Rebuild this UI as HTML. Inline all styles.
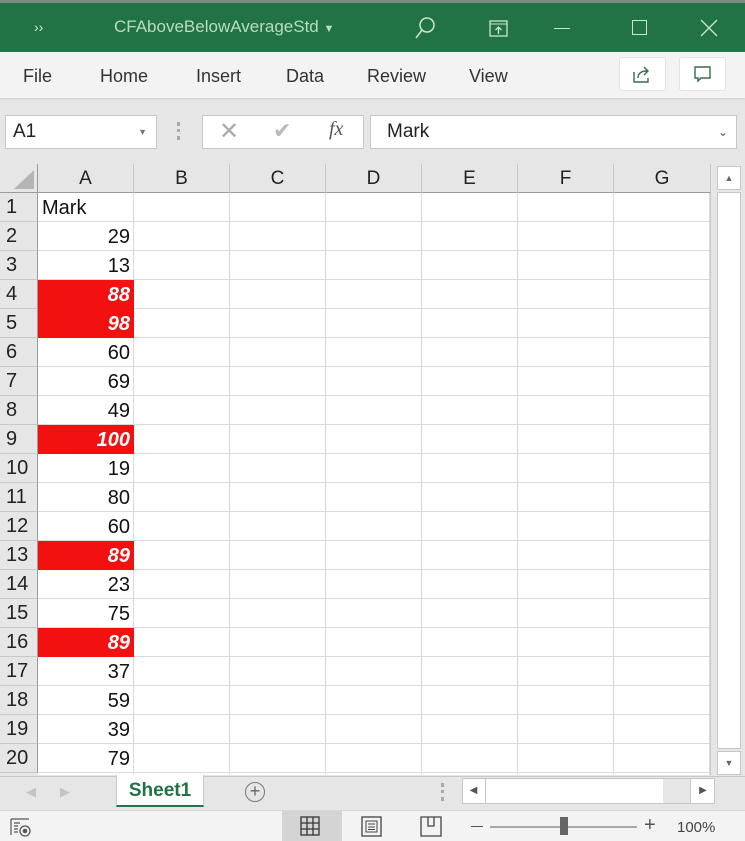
<!DOCTYPE html>
<html><head><style>
*{margin:0;padding:0;box-sizing:border-box}
body{width:745px;height:841px;overflow:hidden;position:relative;background:#e6e6e6;font-family:"Liberation Sans",sans-serif}
.a{position:absolute}
.title{left:0;top:0;width:745px;height:52px;background:#217346;border-top:3px solid #7c8a80}
.menu{left:0;top:52px;width:745px;height:46px;background:#f3f3f3;box-shadow:0 1px 2px #ccc}
.menu span{position:absolute;top:14px;font-size:18px;color:#333}
.hdr{top:164px;height:29px;background:#e6e6e6;border-right:1px solid #c8c8c8;border-bottom:1px solid #9b9b9b;text-align:center;font-size:19px;line-height:30px;color:#222}
.rh{left:0;width:38px;height:29px;background:#e6e6e6;border-bottom:1px solid #c8c8c8;border-right:1px solid #9b9b9b;font-size:20px;line-height:29px;padding-left:6px;color:#222}
.cell{left:38px;width:96px;height:29px;font-size:20px;line-height:30px;text-align:right;padding-right:4px;color:#111}
.red{background:#f21010;color:#fff;font-weight:bold;font-style:italic}
</style></head><body>
<div class="a title">
 <div class="a" style="left:34px;top:16px;color:#cfe6d7;font-size:14px">››</div>
 <div class="a" style="left:114px;top:14px;color:#b7dcc3;font-size:17px">CFAboveBelowAverageStd <span style="font-size:11px">▼</span></div>
 <svg class="a" style="left:412px;top:12px" width="26" height="26"><circle cx="15" cy="10" r="7" fill="none" stroke="#cde3d4" stroke-width="1.5"/><line x1="10" y1="15" x2="4" y2="23" stroke="#cde3d4" stroke-width="1.5"/></svg>
 <svg class="a" style="left:489px;top:17px" width="20" height="18"><rect x="1" y="1" width="17" height="15" fill="none" stroke="#cde3d4" stroke-width="1.3"/><line x1="1" y1="4" x2="18" y2="4" stroke="#cde3d4"/><path d="M9.5 14V7M6.5 10l3-3 3 3" fill="none" stroke="#cde3d4" stroke-width="1.3"/></svg>
 <div class="a" style="left:554px;top:25px;width:16px;height:1px;background:#cde3d4"></div>
 <div class="a" style="left:632px;top:17px;width:15px;height:15px;border:1.3px solid #cde3d4"></div>
 <svg class="a" style="left:700px;top:16px" width="18" height="18"><path d="M1 1L17 17M17 1L1 17" stroke="#cde3d4" stroke-width="1.3"/></svg>
</div>
<div class="a menu">
 <span style="left:23px">File</span><span style="left:100px">Home</span><span style="left:196px">Insert</span><span style="left:286px">Data</span><span style="left:367px">Review</span><span style="left:469px">View</span>
 <div class="a" style="left:619px;top:5px;width:47px;height:34px;background:#fff;border:1px solid #e2e2e2;border-radius:3px"></div>
 <svg class="a" style="left:632px;top:12px" width="20" height="20"><path d="M2 8v10h14v-4" fill="none" stroke="#3a6b4c" stroke-width="1.4"/><path d="M6 14c0-5 4-7 9-7M12 3l4 4-4 4" fill="none" stroke="#3a6b4c" stroke-width="1.4"/></svg>
 <div class="a" style="left:679px;top:5px;width:47px;height:34px;background:#fff;border:1px solid #e2e2e2;border-radius:3px"></div>
 <svg class="a" style="left:693px;top:13px" width="20" height="20"><path d="M2 2h15v11H8l-3 3v-3H2z" fill="none" stroke="#3a6b4c" stroke-width="1.4"/></svg>
</div>
<div class="a" style="left:5px;top:115px;width:152px;height:34px;background:#fff;border:1px solid #c6c6c6;font-size:19px;line-height:32px;padding-left:7px;color:#222">A1<span style="position:absolute;right:9px;font-size:9px;color:#777">▼</span></div>
<div class="a" style="left:177px;top:122px;width:3px;height:18px;border-left:3px dotted #aaa"></div>
<div class="a" style="left:202px;top:115px;width:162px;height:34px;background:#fff;border:1px solid #c6c6c6"></div>
<div class="a" style="left:219px;top:117px;font-size:24px;color:#aaa">✕</div>
<div class="a" style="left:273px;top:118px;font-size:22px;color:#bbb">✔</div>
<div class="a" style="left:329px;top:118px;font-size:20px;font-style:italic;font-family:'Liberation Serif',serif;color:#555">fx</div>
<div class="a" style="left:370px;top:115px;width:367px;height:34px;background:#fff;border:1px solid #c6c6c6;font-size:19px;line-height:32px;padding-left:16px;color:#222">Mark<span style="position:absolute;right:8px;font-size:12px;color:#555">⌄</span></div>
<div class="a" style="left:38px;top:193px;width:673px;height:582px;background:#fff;
background-image:linear-gradient(to right,#dadada 1px,transparent 1px),linear-gradient(to bottom,#dadada 1px,transparent 1px);background-size:96px 29px;background-position:95px 28px;border-right:1px solid #c8c8c8"></div>
<div class="a" style="left:0;top:164px;width:38px;height:29px;background:#e6e6e6;border-right:1px solid #9b9b9b;border-bottom:1px solid #9b9b9b"></div>
<svg class="a" style="left:10px;top:168px" width="26" height="22"><polygon points="24,2 24,21 4,21" fill="#b5b5b5"/></svg>
<div class="a hdr" style="left:38px;width:96px">A</div>
<div class="a hdr" style="left:134px;width:96px">B</div>
<div class="a hdr" style="left:230px;width:96px">C</div>
<div class="a hdr" style="left:326px;width:96px">D</div>
<div class="a hdr" style="left:422px;width:96px">E</div>
<div class="a hdr" style="left:518px;width:96px">F</div>
<div class="a hdr" style="left:614px;width:97px">G</div>
<div class="a rh" style="top:193px">1</div><div class="a cell" style="top:193px;text-align:left;padding-left:4px">Mark</div>
<div class="a rh" style="top:222px">2</div><div class="a cell" style="top:222px">29</div>
<div class="a rh" style="top:251px">3</div><div class="a cell" style="top:251px">13</div>
<div class="a rh" style="top:280px">4</div><div class="a cell red" style="top:280px">88</div>
<div class="a rh" style="top:309px">5</div><div class="a cell red" style="top:309px">98</div>
<div class="a rh" style="top:338px">6</div><div class="a cell" style="top:338px">60</div>
<div class="a rh" style="top:367px">7</div><div class="a cell" style="top:367px">69</div>
<div class="a rh" style="top:396px">8</div><div class="a cell" style="top:396px">49</div>
<div class="a rh" style="top:425px">9</div><div class="a cell red" style="top:425px">100</div>
<div class="a rh" style="top:454px">10</div><div class="a cell" style="top:454px">19</div>
<div class="a rh" style="top:483px">11</div><div class="a cell" style="top:483px">80</div>
<div class="a rh" style="top:512px">12</div><div class="a cell" style="top:512px">60</div>
<div class="a rh" style="top:541px">13</div><div class="a cell red" style="top:541px">89</div>
<div class="a rh" style="top:570px">14</div><div class="a cell" style="top:570px">23</div>
<div class="a rh" style="top:599px">15</div><div class="a cell" style="top:599px">75</div>
<div class="a rh" style="top:628px">16</div><div class="a cell red" style="top:628px">89</div>
<div class="a rh" style="top:657px">17</div><div class="a cell" style="top:657px">37</div>
<div class="a rh" style="top:686px">18</div><div class="a cell" style="top:686px">59</div>
<div class="a rh" style="top:715px">19</div><div class="a cell" style="top:715px">39</div>
<div class="a rh" style="top:744px">20</div><div class="a cell" style="top:744px">79</div>
<div class="a" style="left:0;top:773px;width:38px;height:3px;background:#e6e6e6"></div>
<div class="a" style="left:713px;top:164px;width:32px;height:612px;background:#e6e6e6"></div>
<div class="a" style="left:717px;top:166px;width:24px;height:24px;background:#fff;border:1px solid #c6c6c6;font-size:9px;text-align:center;line-height:22px;color:#666">▲</div>
<div class="a" style="left:717px;top:192px;width:24px;height:557px;background:#fff;border:1px solid #c6c6c6"></div>
<div class="a" style="left:717px;top:751px;width:24px;height:24px;background:#fff;border:1px solid #c6c6c6;font-size:9px;text-align:center;line-height:22px;color:#666">▼</div>
<div class="a" style="left:0;top:776px;width:745px;height:34px;background:#e6e6e6;border-top:1px solid #c8c8c8"></div>
<div class="a" style="left:26px;top:784px;font-size:13px;color:#c4c4c4">◀</div>
<div class="a" style="left:60px;top:784px;font-size:13px;color:#c4c4c4">▶</div>
<div class="a" style="left:116px;top:775px;width:88px;height:32px;background:#fff;border-left:1px solid #c8c8c8;border-right:1px solid #c8c8c8;border-bottom:2px solid #217346;font-size:19px;font-weight:bold;color:#217346;text-align:center;line-height:31px">Sheet1</div>
<div class="a" style="left:245px;top:782px;width:20px;height:20px;border:1.3px solid #777;border-radius:50%;text-align:center;line-height:17px;font-size:18px;color:#666">+</div>
<div class="a" style="left:441px;top:783px;width:3px;height:18px;border-left:3px dotted #aaa"></div>
<div class="a" style="left:462px;top:778px;width:253px;height:26px;background:#fff;border:1px solid #c6c6c6"></div>
<div class="a" style="left:462px;top:778px;width:24px;height:26px;border-right:1px solid #c6c6c6;font-size:10px;text-align:center;line-height:25px;color:#555">◀</div>
<div class="a" style="left:663px;top:779px;width:27px;height:24px;background:#e6e6e6"></div>
<div class="a" style="left:690px;top:778px;width:25px;height:26px;border-left:1px solid #c6c6c6;font-size:10px;text-align:center;line-height:25px;color:#555">▶</div>
<div class="a" style="left:0;top:810px;width:745px;height:31px;background:#f3f3f3;border-top:1px solid #d6d6d6"></div>
<svg class="a" style="left:9px;top:817px" width="24" height="22"><path d="M2 2h18M2 2v16M5 6h6M5 9h4M5 12h4M5 15h4" stroke="#555" stroke-width="1.2" fill="none"/><circle cx="16" cy="14" r="5" fill="none" stroke="#555" stroke-width="1.3"/><circle cx="16" cy="14" r="2.3" fill="#555"/></svg>
<div class="a" style="left:282px;top:811px;width:60px;height:30px;background:#d4d4d4"></div>
<svg class="a" style="left:300px;top:816px" width="22" height="22"><rect x="1" y="1" width="18" height="18" fill="none" stroke="#333" stroke-width="1.3"/><path d="M7 1v18M13 1v18M1 7h18M1 13h18" stroke="#333" stroke-width="1.3"/></svg>
<svg class="a" style="left:361px;top:816px" width="22" height="22"><rect x="1" y="1" width="19" height="19" fill="none" stroke="#444" stroke-width="1.3"/><rect x="5" y="5" width="11" height="11" fill="none" stroke="#444"/><path d="M7 8h7M7 11h7M7 13.5h7" stroke="#444"/></svg>
<svg class="a" style="left:420px;top:816px" width="24" height="22"><path d="M1 1h20v19H1zM8 1v9h6V1" fill="none" stroke="#444" stroke-width="1.3"/></svg>
<div class="a" style="left:471px;top:826px;width:12px;height:1px;background:#555"></div>
<div class="a" style="left:490px;top:826px;width:147px;height:2px;background:#a8a8a8"></div>
<div class="a" style="left:560px;top:817px;width:8px;height:18px;background:#666"></div>
<div class="a" style="left:644px;top:814px;font-size:20px;color:#555">+</div>
<div class="a" style="left:677px;top:819px;font-size:15px;color:#444">100%</div>
</body></html>
